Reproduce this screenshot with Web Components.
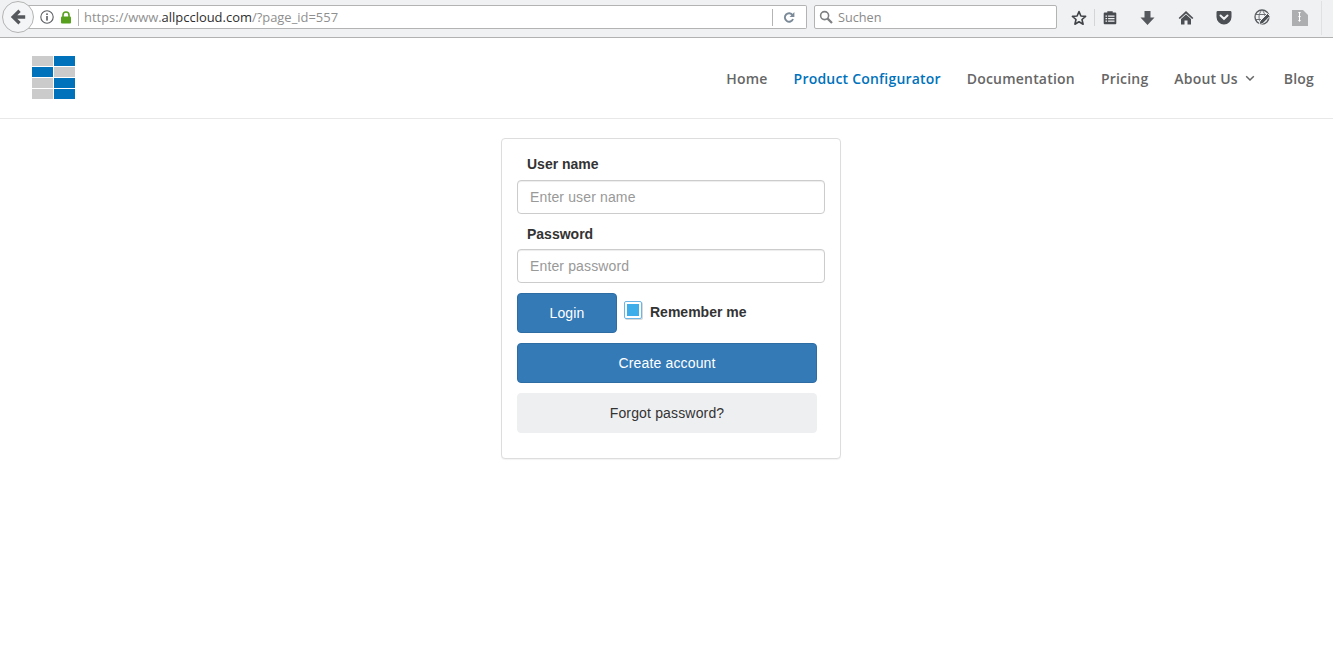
<!DOCTYPE html>
<html lang="de">
<head>
<meta charset="utf-8">
<title>allpccloud</title>
<style>
html,body{margin:0;padding:0;background:#fff;height:100%;overflow:hidden}
body{display:flex;flex-direction:column;font-family:"Liberation Sans",Arial,sans-serif}
</style>
</head>
<body>
<browser-chrome></browser-chrome>
<site-header></site-header>
<login-page></login-page>
<script>
function def(name, html){
  customElements.define(name, class extends HTMLElement{
    constructor(){super();this.attachShadow({mode:'open'}).innerHTML=html;}
  });
}
def('browser-chrome',`<style>
:host{display:flex;align-items:flex-start;height:37px;background:#f0f1f3;border-bottom:1px solid #b1b1b1;box-sizing:content-box;position:relative;font-family:"Open Sans",sans-serif;font-size:12.7px}
.back{position:absolute;left:2px;top:1px;width:32px;height:32px;border-radius:50%;box-sizing:border-box;border:1px solid #b4b4b4;background:#f4f5f6;display:flex;align-items:center;justify-content:center;z-index:1}
.url{margin:5px 0 0 28px;width:779px;height:24px;box-sizing:border-box;border:1px solid #b3b3b3;border-left:none;border-radius:0 2px 2px 0;background:#fff;display:flex;align-items:center;padding-left:12px;color:#8f8f8f;white-space:nowrap;font-size:12.95px}
.url b{font-weight:400;color:#2e2e2e}
.url .info{margin-right:6px;flex:none}
.url .lock{margin-right:6px;flex:none}
.bar{width:1px;height:17px;background:#b4b4b4;flex:none}
.addr{margin-left:5px;flex:1}
.reload{flex:none;margin:0 11px 0 10px}
.search{margin:5px 0 0 7px;width:243px;height:24px;box-sizing:border-box;border:1px solid #b3b3b3;border-radius:2px;background:#fff;display:flex;align-items:center;padding-left:4px;color:#8a8a8a;gap:5px}
.tools{display:flex;align-items:center;height:35px;margin-left:14px}
.tools svg{display:block;flex:none}
.sep{width:1px;height:17px;background:#d4d5d7;flex:none}
</style>
<div class="back"><svg width="16" height="16" viewBox="0 0 16 16"><path d="M8.400 .6 .8 8l7.600 7.400 2.300-2.300-3.400-3.300h7.900V6.200H7.300l3.400-3.300z" fill="#55585c"/></svg></div>
<div class="url">
<svg class="info" width="14" height="14" viewBox="0 0 14 14"><circle cx="7" cy="7" r="6.200" fill="none" stroke="#5b5e62" stroke-width="1.100"/><rect x="6.200" y="6" width="1.600" height="4.600" fill="#5b5e62"/><rect x="6.200" y="3.400" width="1.600" height="1.600" fill="#5b5e62"/></svg>
<svg class="lock" width="12" height="13" viewBox="0 0 12 13"><path d="M3 6V4a3 3 0 0 1 6 0v2" fill="none" stroke="#57a11e" stroke-width="1.600"/><rect x="1" y="5.500" width="10" height="7" rx="1" fill="#57a11e"/></svg>
<span class="bar"></span>
<span class="addr">https://www.<b>allpccloud.com</b>/?page_id=557</span>
<span class="bar"></span>
<svg class="reload" width="12" height="12" viewBox="0 0 12 12"><path d="M9.600 4.200A4.200 4.200 0 1 0 10 8" fill="none" stroke="#7b8a98" stroke-width="1.900"/><path d="M11.400 1v5H6.600z" fill="#7b8a98"/></svg>
</div>
<div class="search">
<svg width="14" height="14" viewBox="0 0 14 14"><circle cx="5.600" cy="5.600" r="4" fill="none" stroke="#7d7f82" stroke-width="1.600"/><path d="M8.600 8.600 13 13" stroke="#7d7f82" stroke-width="2.200"/></svg>
<span>Suchen</span>
</div>
<div class="tools">
<svg width="16" height="16" viewBox="0 0 16 16"><path d="M8 1.600 9.900 6l4.700.4-3.600 3.100 1.100 4.700L8 11.700l-4.100 2.500L5 9.500 1.400 6.400 6.100 6z" fill="none" stroke="#3f4246" stroke-width="1.600" stroke-linejoin="round"/></svg>
<span class="sep" style="margin-left:7px"></span>
<svg width="14" height="15" viewBox="0 0 14 15" style="margin-left:8px"><path d="M1.700 2.600h2.600V1.200h5.400v1.400h2.600a1 1 0 0 1 1 1v9.600a1 1 0 0 1-1 1H1.700a1 1 0 0 1-1-1V3.600a1 1 0 0 1 1-1z" fill="#484b4f"/><path d="M2.500 5.500h9v1.200h-9zM2.500 8h9v1.200h-9zM2.500 10.500h9v1.200h-9z" fill="#f0f1f3"/><path d="M4.600 5v7.200" stroke="#484b4f" stroke-width="1"/></svg>
<svg width="15" height="16" viewBox="0 0 15 16" style="margin-left:23px"><path d="M4.500 1h6v6.500h4L7.500 15 .5 7.500h4z" fill="#55585c"/></svg>
<svg width="16" height="15" viewBox="0 0 16 15" style="margin-left:23px"><path d="M8 1 .6 8l1.200 1L8 3.400 14.200 9l1.200-1z" fill="#4c4f53"/><path d="M8 4.500 3 9v5.500h3.500V10.500h3v4H13V9z" fill="#4c4f53"/></svg>
<svg width="16" height="15" viewBox="0 0 16 15" style="margin-left:22px"><path d="M1.800 1h12.400A1.300 1.300 0 0 1 15.500 2.300V7a7.500 7.500 0 0 1-15 0V2.300A1.300 1.300 0 0 1 1.800 1z" fill="#4c4f53"/><path d="M4.500 5.500 8 8.800l3.500-3.300" fill="none" stroke="#f0f1f3" stroke-width="2" stroke-linecap="round"/></svg>
<svg width="17" height="17" viewBox="0 0 17 17" style="margin-left:22px"><circle cx="8" cy="8" r="7" fill="none" stroke="#55585c" stroke-width="1.300"/><path d="M1.500 5.500h13M1.500 10.500h13M8 1c-4 4-4 10 0 14M8 1c4 4 4 10 0 14" fill="none" stroke="#6b6e72" stroke-width="1"/><path d="M5 15.600 6 12 13.500 4.500 16.200 7.200 8.700 14.700z" fill="#4c4f53" stroke="#f0f1f3" stroke-width="1"/></svg>
<svg width="16" height="16" viewBox="0 0 16 16" style="margin-left:21px"><path d="M0 0h11l5 5v11H0z" fill="#adaeb0"/><path d="M6 2h3l-1.500 2zM6 6h3l-1.500 2zM6 10h3l-1.500 2z" fill="#fff"/><path d="M7 3h1v8H7z" fill="#fff"/></svg>
<span class="sep" style="margin-left:13px;height:34px;background:#e0e1e3"></span>
</div>`);

def('site-logo',`<style>
:host{display:grid;grid-template-columns:21px 21px;grid-auto-rows:10px;gap:1px;width:43px;height:43px}
i{display:block}.g{background:#cbcbcb}.b{background:#0072bc}
</style>
<i class="g"></i><i class="b"></i><i class="b"></i><i class="g"></i><i class="g"></i><i class="b"></i><i class="g"></i><i class="b"></i>`);

def('nav-link',`<style>
:host{display:inline-flex;align-items:center;font:600 14px/20px "Open Sans",sans-serif;letter-spacing:.2px;color:var(--c,#666)}
:host([active]){--c:#0072bc}
</style><slot></slot>`);

def('site-header',`<style>
:host{display:flex;align-items:center;justify-content:space-between;height:81px;box-sizing:border-box;border-bottom:1px solid #e8e8e8;padding:0 19px 0 32px;background:#fff}
nav{display:flex;gap:26px;align-items:center;margin-top:1px}
svg{margin:0 3px 0 7px}
site-logo{margin-bottom:2px}
</style>
<site-logo></site-logo>
<nav>
<nav-link>Home</nav-link>
<nav-link active>Product Configurator</nav-link>
<nav-link>Documentation</nav-link>
<nav-link>Pricing</nav-link>
<nav-link>About Us<svg width="10" height="7" viewBox="0 0 10 7"><path d="M1.200 1.200 5 5l3.800-3.800" fill="none" stroke="#666" stroke-width="1.500"/></svg></nav-link>
<nav-link>Blog</nav-link>
</nav>`);

def('form-field',`<style>
:host{display:block;margin-bottom:10px}
label{display:block;font:700 14px/20px "Liberation Sans",Arial,sans-serif;color:#333;padding-left:10px;margin-bottom:5px}
:host([first]) label{margin-bottom:6px}
.box{display:block;height:34px;box-sizing:border-box;border:1px solid #ccc;border-radius:4px;padding:0 12px;font:14px/32px "Liberation Sans",Arial,sans-serif;letter-spacing:.14px;color:#999;box-shadow:inset 0 1px 1px rgba(0,0,0,.075);background:#fff}
</style>
<label><slot name="label"></slot></label>
<span class="box"><slot name="ph"></slot></span>`);

def('ui-button',`<style>
:host{display:block;width:300px;height:40px;box-sizing:border-box;border-radius:4px;font:14px/38px "Liberation Sans",Arial,sans-serif;letter-spacing:.16px;text-align:center;background:#337ab7;color:#fff;border:1px solid #2e6da4}
:host([plain]){background:#eeeff1;border-color:#eeeff1;color:#333}
:host([small]){width:100px;flex:none}
</style><slot></slot>`);

def('check-box',`<style>
:host{display:block;flex:none;width:18px;height:18px;box-sizing:border-box;border:1px solid #6cb6e6;border-radius:2px;background:#fff;padding:2px;box-shadow:1px 1px 0 #d9d9d9}
i{display:block;width:12px;height:12px;background:#3daee9}
</style><i></i>`);

def('login-card',`<style>
:host{display:block;width:340px;height:321px;box-sizing:border-box;border:1px solid #ddd;border-radius:4px;padding:15px 15px 25px;background:#fff;box-shadow:0 1px 1px rgba(0,0,0,.05)}
.row{display:flex;align-items:flex-start;margin-bottom:10px}
.rem{display:flex;align-items:flex-start;margin-left:7px;margin-top:8px;font:700 14px/20px "Liberation Sans",Arial,sans-serif;color:#333;gap:8px}
.rem span{margin-top:1px}
ui-button{margin-bottom:10px}
ui-button:last-child{margin-bottom:0}
.row ui-button{margin-bottom:0}
</style>
<form-field first><span slot="label">User name</span><span slot="ph">Enter user name</span></form-field>
<form-field><span slot="label">Password</span><span slot="ph">Enter password</span></form-field>
<div class="row"><ui-button small>Login</ui-button><div class="rem"><check-box></check-box><span>Remember me</span></div></div>
<ui-button>Create account</ui-button>
<ui-button plain>Forgot password?</ui-button>`);

def('login-page',`<style>
:host{display:flex;justify-content:center;align-items:flex-start;flex:1;padding-top:19px;padding-left:9px;background:#fff}
</style><login-card></login-card>`);
</script>
</body>
</html>
